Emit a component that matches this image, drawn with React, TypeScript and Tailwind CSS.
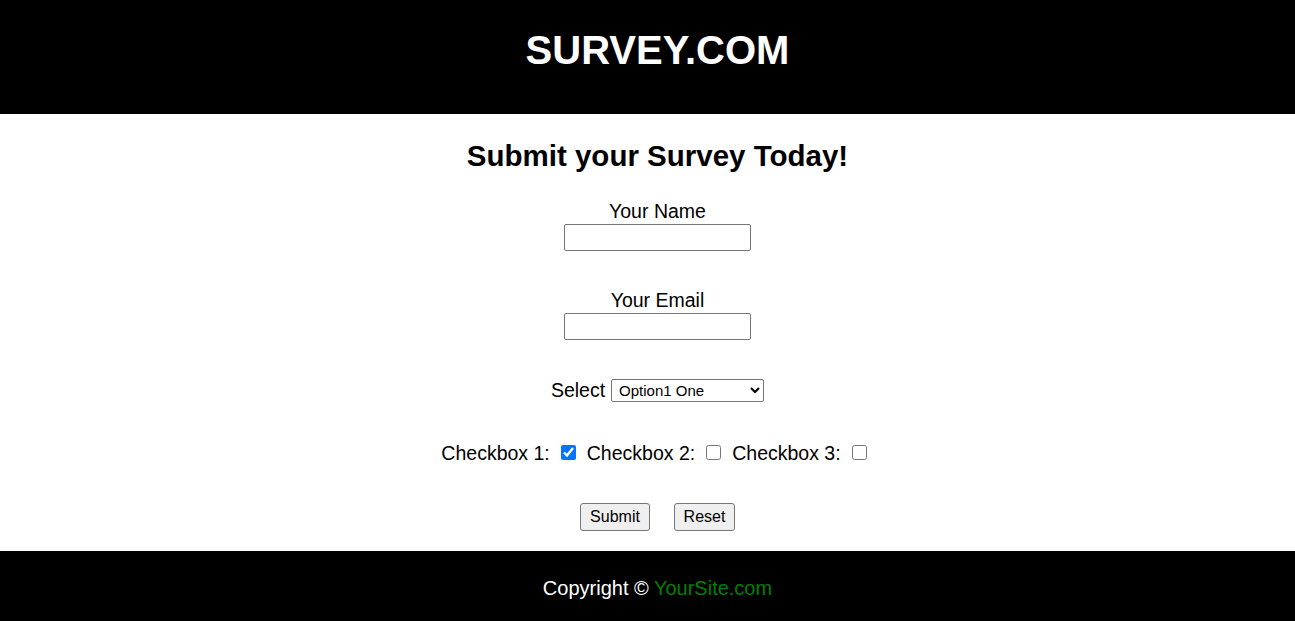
import { useState } from "react";

const font = "font-['Liberation_Sans',Arial,Helvetica,sans-serif]";

export default function App() {
  const [name, setName] = useState("");
  const [email, setEmail] = useState("");
  const [choice, setChoice] = useState("one");
  const [checks, setChecks] = useState([true, false, false]);

  const toggle = (i: number) =>
    setChecks((prev) => prev.map((c, idx) => (idx === i ? !c : c)));

  const reset = () => {
    setName("");
    setEmail("");
    setChoice("one");
    setChecks([true, false, false]);
  };

  return (
    <div className={`${font} min-h-[621px] bg-white text-black`}>
      <header className="h-[114px] bg-black pl-[20px] pt-[27px]">
        <h1 className="text-center text-[40px] font-bold leading-[46px] text-white">
          SURVEY.COM
        </h1>
      </header>

      <main className="flex h-[437px] flex-col items-center pl-[20px]">
        <h2 className="mt-[25px] text-[29.5px] font-bold leading-[34px]">
          Submit your Survey Today!
        </h2>

        <form
          className="flex flex-col items-center"
          onSubmit={(e) => e.preventDefault()}>
          <label htmlFor="name" className="mt-[27px] text-[19.5px] leading-[23px]">
            Your Name
          </label>
          <input
            id="name"
            type="text"
            value={name}
            onChange={(e) => setName(e.target.value)}
            className="mt-[1px] h-[27px] w-[187px] rounded-[2px] border border-[#767676] bg-white px-[2px] text-[16px]"
          />

          <label htmlFor="email" className="mt-[38px] text-[19.5px] leading-[23px]">
            Your Email
          </label>
          <input
            id="email"
            type="email"
            value={email}
            onChange={(e) => setEmail(e.target.value)}
            className="mt-[1px] h-[27px] w-[187px] rounded-[2px] border border-[#767676] bg-white px-[2px] text-[16px]"
          />

          <div className="mt-[39px] flex items-center gap-[6px]">
            <label htmlFor="choice" className="text-[19.5px] leading-[23px]">
              Select
            </label>
            <select
              id="choice"
              value={choice}
              onChange={(e) => setChoice(e.target.value)}
              className="h-[23px] w-[153px] rounded-[2px] border border-[#767676] bg-white pl-[3px] text-[15px]">
              <option value="one">Option1 One</option>
              <option value="two">Option2 Two</option>
              <option value="three">Option3 Three</option>
            </select>
          </div>

          <div className="mt-[40px] flex items-center gap-[11px] pr-[7px] text-[19.5px] leading-[23px]">
            {[1, 2, 3].map((n, i) => (
              <label key={n} className="flex items-center gap-[11px]">
                <span>Checkbox {n}:</span>
                <input
                  type="checkbox"
                  checked={checks[i]}
                  onChange={() => toggle(i)}
                  className="-mt-[3px] h-[15px] w-[15px]"
                />
              </label>
            ))}
          </div>

          <div className="mt-[38px] flex items-center gap-[24px]">
            <button
              type="submit"
              className="h-[28px] w-[70px] rounded-[3px] border border-[#767676] bg-[#efefef] text-[16px]">
              Submit
            </button>
            <button
              type="button"
              onClick={reset}
              className="h-[28px] w-[61px] rounded-[3px] border border-[#767676] bg-[#efefef] text-[16px]">
              Reset
            </button>
          </div>
        </form>
      </main>

      <footer className="flex h-[70px] items-center justify-center bg-black pl-[20px] pt-[4px] text-[20px] text-white">
        <p>
          Copyright &copy; <span className="text-[#008000]">YourSite.com</span>
        </p>
      </footer>
    </div>
  );
}
